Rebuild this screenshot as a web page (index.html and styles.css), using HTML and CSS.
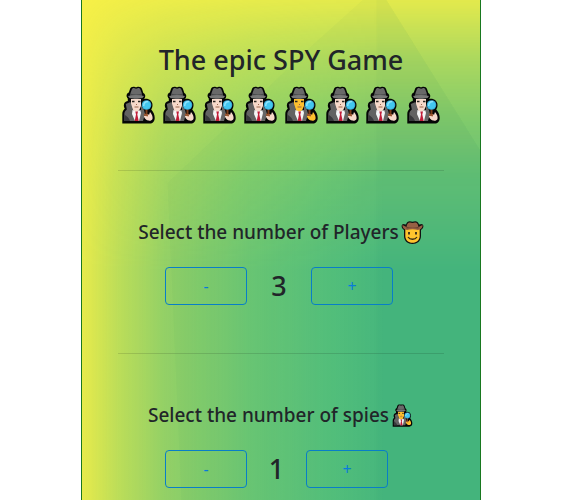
FILE: index.html
```html
<!DOCTYPE html>
<html lang="en">
<head>
<meta charset="utf-8">
<meta name="viewport" content="width=device-width, initial-scale=1">
<title>The epic SPY Game</title>
<link rel="stylesheet" href="styles.css">
</head>
<body>
<svg class="defs" aria-hidden="true">
  <symbol id="spy" viewBox="0 0 33 38">
    <path d="M.3 37.500V28c0-2.500 1-4 2.500-5.500-1.300-1.500-1.300-4.500 0-6 .8-.8 1.800-1.300 3-1.500v-2.500c-2-2-1.500-5 1-6l1.200-3.500c.7-2 3-2.800 5-2 .7.300 1.300.3 2 0 2-.8 4.300 0 5 2L21.300 7c2.500 1.500 2.500 4 .7 6 5-.8 8.500 2 8.500 6 0 1.800-.5 3.200-1.300 4.500 2.300 2.500 3.500 5.500 3.500 8.500 0 3.500-2 5.500-5 5.500z" fill="#050606"/>
    <path d="M9 13h10v7l-2 4.500-3 2-3-2L9 20z" fill="currentColor"/>
    <path d="M3.800 18l4.700-2 2.500 8 3 11H2.300v-7c0-2 1-3.200 2.500-4.500z" fill="#626262"/>
    <path d="M19 19l3 5 1 4-2 7h-6l4-9z" fill="#666"/>
    <path d="M2.300 28c1.200 2 4.700 3 5.700 7H2.300z" fill="#38393c"/>
    <path d="M10.500 24l4 1.500 4-1.500 .5 3-2 8h-4l-3-7z" fill="#f4f5f6"/>
    <path d="M13.300 25.500h2.700l-.7 3 1.400 6.500h-4l1.300-6.500z" fill="#c11d38"/>
    <path d="M8.500 7l1.200-3.300c.5-1.500 1.600-2 2.900-1.400 1 .5 2 .5 3 0 1.300-.5 2.400.1 2.900 1.400L19.700 7v3H8.500z" fill="#696969"/>
    <path d="M8 7.500c4 1.200 8 1.200 12 0V10H8z" fill="#48494b"/>
    <path d="M6 10c5-1.300 11-1.300 16 0l-1.500 2c-5 1-8 1-13 0z" fill="#777"/>
    <path d="M10 15.500h2.500M16 15.500h2.500" stroke="#28251f" stroke-width="1.500"/>
    <path d="M12.500 21h4M14.500 18v1" stroke="#98644b" stroke-width="1"/>
    <path d="M24.500 23v7" stroke="#7c3e1c" stroke-width="2"/>
    <circle cx="24.500" cy="19" r="4.800" fill="#36a4cf"/>
    <circle cx="24.500" cy="19" r="3.900" fill="#43c7ef"/>
    <path d="M21.700 20c0-3 2-4.500 4.500-4.500" fill="none" stroke="#8be1fb" stroke-width="1.500"/>
    <path d="M22 30l3-1 1-1 1 1 1-3c2 2 3 5 2.500 7-.7 1.600-2.500 2-4.500 1.600-2-.5-3.500-2-4-4z" fill="currentColor"/>
    <path d="M22 28.500l4 1" stroke="#9c5630" stroke-width="2"/>
  </symbol>
  <symbol id="cowboy" viewBox="0 0 23 23">
    <path d="M3 9C0 7 0 4 2 3l3 .5C6 0 8.500-.3 11.500.8 14.500-.3 17 0 18 3.500L21 3c2 1 2 4-1 6v6c0 5-4 8-8.500 8S3 20 3 15z" fill="#111"/>
    <path d="M4.300 8h14.400v7c0 4-3.200 6.800-7.200 6.800S4.300 19 4.300 15z" fill="#ffc42e"/>
    <path d="M1.500 4l4 2C6 3 7 1.300 9 1.500c1.500.5 3.500.5 5 0 2-.2 3 1.500 3.500 4.500l4-2c.3 3-2 4.500-4.500 5-4-1-7-1-11 0-2.500-.5-4.800-2-4.500-5z" fill="#986044"/>
    <path d="M5.500 6c4 1 8 1 12 0v1.500c-4-.8-8-.8-12 0z" fill="#64402e"/>
    <path d="M8 11v2.500M15 11v2.500" stroke="#342b18" stroke-width="1.800"/>
    <path d="M7 16c2 3 7 3 9 0" fill="none" stroke="#342b18" stroke-width="1.300"/>
  </symbol>
</svg>
<main class="game">
  <svg class="facets" viewBox="0 0 400 500" preserveAspectRatio="none" aria-hidden="true">
    <path d="M282 0L234 43 86 183l14 317h300V150L306 0z"/>
    <path d="M296 0h10l94 150v350H296z"/>
  </svg>
  <header class="intro">
    <h1 class="title">The epic SPY Game</h1>
    <div class="spies" role="img" aria-label="Eight spies">
      <svg class="spy pale"><use href="#spy"/></svg>
      <svg class="spy pale"><use href="#spy"/></svg>
      <svg class="spy pale"><use href="#spy"/></svg>
      <svg class="spy pale"><use href="#spy"/></svg>
      <svg class="spy"><use href="#spy"/></svg>
      <svg class="spy pale"><use href="#spy"/></svg>
      <svg class="spy pale"><use href="#spy"/></svg>
      <svg class="spy pale"><use href="#spy"/></svg>
    </div>
  </header>
  <section class="setting">
    <h2 class="label">Select the number of Players<svg class="emoji" aria-hidden="true"><use href="#cowboy"/></svg></h2>
    <div class="stepper">
      <button class="step" type="button" aria-label="Fewer players">-</button>
      <output class="count">3</output>
      <button class="step" type="button" aria-label="More players">+</button>
    </div>
  </section>
  <section class="setting">
    <h2 class="label">Select the number of spies<svg class="emoji" aria-hidden="true"><use href="#spy"/></svg></h2>
    <div class="stepper">
      <button class="step" type="button" aria-label="Fewer spies">-</button>
      <output class="count slim">1</output>
      <button class="step" type="button" aria-label="More spies">+</button>
    </div>
  </section>
</main>
</body>
</html>
```
FILE: styles.css
```css
* { box-sizing: border-box; }

body {
  margin: 0;
  padding-right: 11px;
  background: #fff;
  color: #212529;
  font-family: "Segoe UI", "Noto Sans", sans-serif;
  font-size: 16px;
}

.defs {
  position: absolute;
  width: 0;
  height: 0;
}

.game {
  position: relative;
  isolation: isolate;
  max-width: 400px;
  min-height: 100vh;
  margin: 0 auto;
  padding: 0 36px;
  border: solid #18781f;
  border-width: 0 1px;
  background: #f9f146;
}

/* Green deepens toward the right and fades out toward the top. */
.game::before {
  content: "";
  position: absolute;
  inset: 0;
  z-index: -2;
  background: linear-gradient(90deg, rgb(72 184 126 / 10%), rgb(72 184 126 / 34%) 9%, rgb(72 184 126 / 58%) 21%, rgb(76 190 126 / 82%) 42%, rgb(76 190 126 / 94%) 60%, #48b87e 76%);
  mask-image: linear-gradient(180deg, rgb(0 0 0 / 12%), rgb(0 0 0 / 44%) 60px, rgb(0 0 0 / 68%) 120px, rgb(0 0 0 / 86%) 180px, #000 270px);
}

.facets {
  position: absolute;
  inset: 0;
  z-index: -1;
  width: 100%;
  height: 100%;
  fill: rgb(40 130 80 / 3%);
}

.intro {
  padding: 42px 0 46px;
  text-align: center;
}

.title {
  margin: 0 0 8px;
  font-size: 27px;
  font-weight: 500;
  line-height: 36px;
}

.spies {
  display: flex;
  justify-content: space-between;
  padding: 0 4px;
}

.spy {
  width: 33px;
  height: 38px;
  color: #ffc02e;
}

.pale { color: #f7d9ca; }

.setting {
  padding: 49px 0 48px;
  border-top: 1px solid rgb(0 0 0 / 12%);
}

.setting:last-child { padding-bottom: 0; }

.label {
  display: flex;
  align-items: center;
  justify-content: center;
  gap: 2px;
  margin: 0 0 23px;
  font-size: 19px;
  font-weight: 500;
  line-height: 24px;
  white-space: nowrap;
}

.emoji {
  width: 23px;
  height: 23px;
  color: #ffc02e;
}

.stepper {
  display: flex;
  align-items: center;
  padding-left: 47px;
}

.step {
  width: 82px;
  height: 38px;
  padding: 0;
  border: 1px solid #087ec8;
  border-radius: 4px;
  background: transparent;
  color: #087bdc;
  font: inherit;
}

.count {
  width: 64px;
  font-size: 27px;
  font-weight: 500;
  line-height: 36px;
  text-align: center;
}

.slim { width: 59px; }
```
